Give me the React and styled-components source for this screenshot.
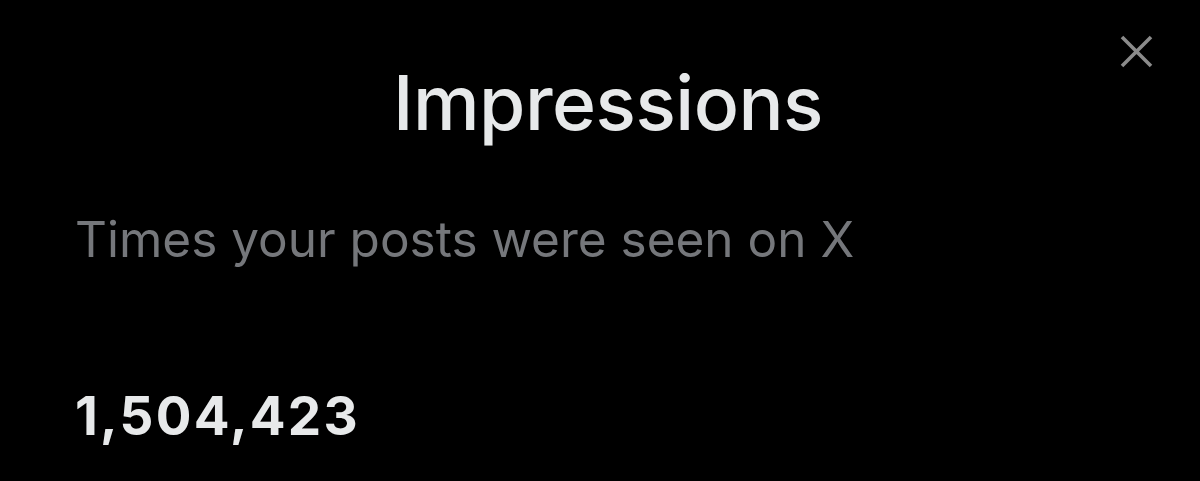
import React from 'react'
import styled, { createGlobalStyle } from 'styled-components'

const GlobalStyle = createGlobalStyle`
  html, body {
    margin: 0;
    padding: 0;
    background: #000;
  }
  body {
    font-family: Inter, "Noto Sans", sans-serif;
    -webkit-font-smoothing: antialiased;
  }
`

const Sheet = styled.div`
  width: 1200px;
  height: 481px;
  background: #000;
  position: relative;
  display: flex;
  flex-direction: column;
  padding: 0 0 0 75px;
  box-sizing: border-box;
  overflow: hidden;
`

const Header = styled.div`
  display: flex;
  justify-content: center;
  padding: 58px 0 0 0;
  margin-left: -59px;
`

const Title = styled.h1`
  margin: 0;
  font-size: 75px;
  font-weight: 500;
  color: #e7e9ea;
  line-height: 90px;
  letter-spacing: -0.5px;
`

const CloseButton = styled.button`
  position: absolute;
  top: 35px;
  right: 47px;
  width: 33px;
  height: 33px;
  padding: 0;
  border: none;
  background: transparent;
  display: flex;
  align-items: center;
  justify-content: center;
`

const Subtitle = styled.p`
  margin: 61px 0 0 0;
  font-size: 49.5px;
  font-weight: 400;
  color: #75777b;
  line-height: 60px;
`

const Count = styled.div`
  margin-top: 115px;
  font-size: 53px;
  font-weight: 700;
  color: #e7e9ea;
  line-height: 64px;
  letter-spacing: 2.2px;
`

export default function App() {
  return (
    <>
      <GlobalStyle />
      <Sheet>
        <Header>
          <Title>Impressions</Title>
        </Header>
        <CloseButton aria-label="Close">
          <svg width="33" height="33" viewBox="0 0 33 33">
            <path d="M2 2 L31 31 M31 2 L2 31" stroke="#8b8b8b" strokeWidth="3.6" />
          </svg>
        </CloseButton>
        <Subtitle>Times your posts were seen on X</Subtitle>
        <Count>1,504,423</Count>
      </Sheet>
    </>
  )
}
